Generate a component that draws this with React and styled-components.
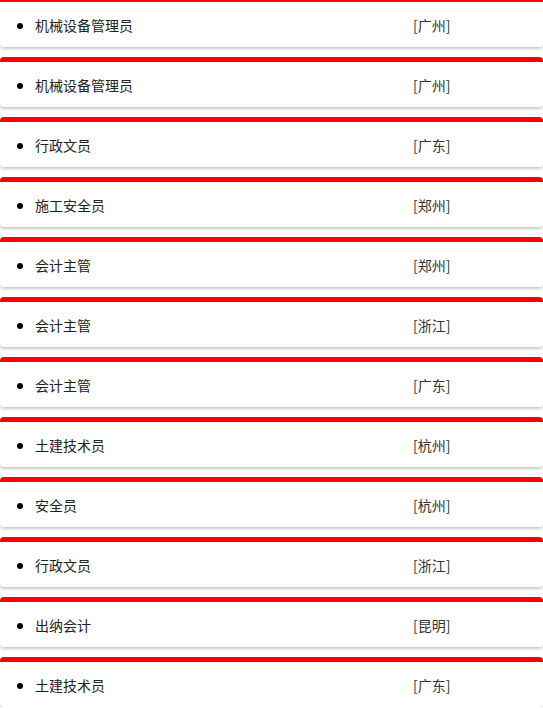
import React from "react";
import styled, { createGlobalStyle } from "styled-components";

const Global = createGlobalStyle`
  html, body { margin: 0; padding: 0; background: #fff; }
  body { font-family: "Noto Sans CJK SC", "Noto Sans", sans-serif; }
`;

const List = styled.div`
  margin-top: -3px;
  display: flex;
  flex-direction: column;
  gap: 10px;
`;

const Card = styled.div`
  height: 45px;
  border-top: 5px solid #ff0000;
  border-radius: 4px;
  background: #fff;
  box-shadow: 0 2px 3px rgba(0, 0, 0, 0.22);
  display: flex;
  align-items: center;
`;

const Items = styled.ul`
  margin: 0;
  padding-left: 35px;
  width: 100%;
  box-sizing: border-box;
`;

const Item = styled.li`
  display: list-item;
  list-style: disc;
  font-size: 14px;
  line-height: 20px;
  color: #000;
  &::marker { color: #000; font-size: 15px; }
`;

const Row = styled.div`
  display: grid;
  grid-template-columns: 378px auto;
`;

const Title = styled.span`
  color: #222;
`;

const Place = styled.span`
  color: #333;
`;

const data = [
  ["机械设备管理员", "广州"],
  ["机械设备管理员", "广州"],
  ["行政文员", "广东"],
  ["施工安全员", "郑州"],
  ["会计主管", "郑州"],
  ["会计主管", "浙江"],
  ["会计主管", "广东"],
  ["土建技术员", "杭州"],
  ["安全员", "杭州"],
  ["行政文员", "浙江"],
  ["出纳会计", "昆明"],
  ["土建技术员", "广东"],
];

export default function App() {
  return (
    <>
      <Global />
      <List>
        {data.map(([t, p], i) => (
          <Card key={i}>
            <Items>
              <Item>
                <Row>
                  <Title>{t}</Title>
                  <Place>[{p}]</Place>
                </Row>
              </Item>
            </Items>
          </Card>
        ))}
      </List>
    </>
  );
}
